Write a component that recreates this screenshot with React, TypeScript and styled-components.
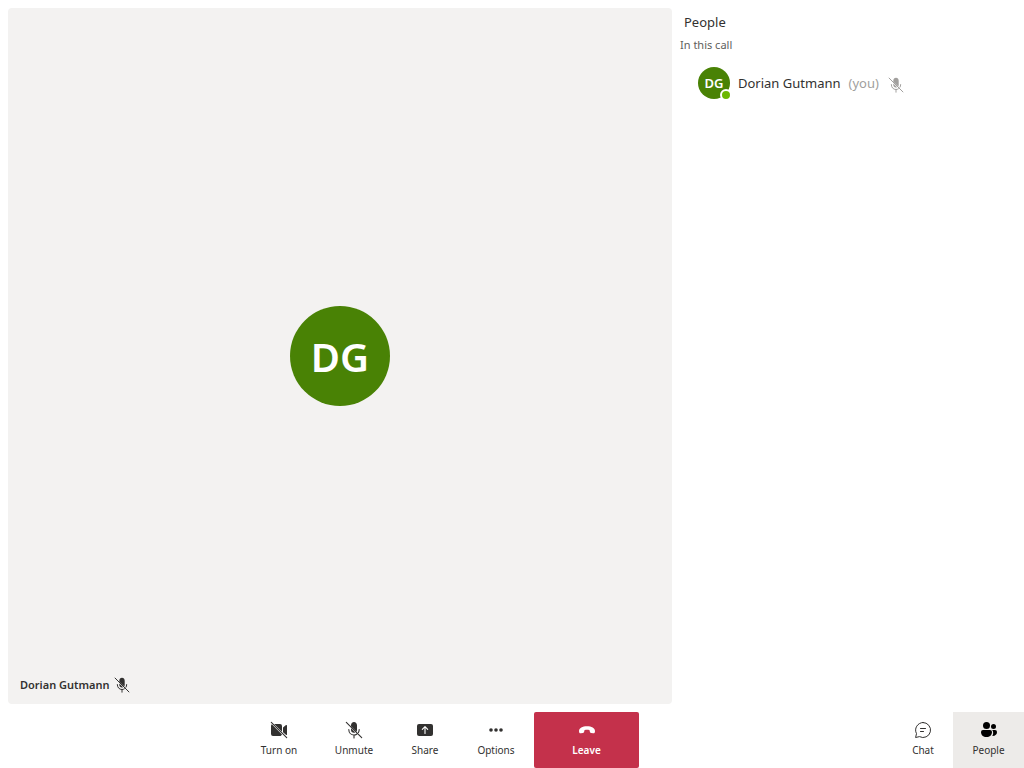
import React from "react";
import styled, { createGlobalStyle, css } from "styled-components";

const GlobalStyle = createGlobalStyle`
  * { box-sizing: border-box; }
  body {
    margin: 0;
    background: #ffffff;
    color: #323130;
    font-family: "Noto Sans", "Open Sans", sans-serif;
  }
  button { font-family: inherit; color: inherit; }
`;

const Page = styled.div`
  display: flex;
  flex-direction: column;
  min-height: 100vh;
`;

const Content = styled.main`
  display: flex;
  flex: 1;
`;

const Stage = styled.section`
  display: flex;
  flex: 1;
  padding: 8px 0 8px 8px;
`;

const VideoTile = styled.div`
  flex: 1;
  display: grid;
  grid-template-rows: 1fr auto 1fr;
  justify-items: center;
  border-radius: 4px;
  background: #f3f2f1;
`;

const Avatar = styled.div<{ $large?: boolean }>`
  display: flex;
  align-items: center;
  justify-content: center;
  border-radius: 50%;
  background: #498205;
  color: #ffffff;
  font-weight: 600;
  ${({ $large }) =>
    $large
      ? css`
          grid-row: 2;
          width: 100px;
          height: 100px;
          padding-top: 2px;
          font-size: 40px;
          line-height: 48px;
        `
      : css`
          position: relative;
          width: 32px;
          height: 32px;
          font-size: 13px;
          line-height: 18px;
        `}
`;

const Presence = styled.span`
  position: absolute;
  right: -2px;
  bottom: -2px;
  width: 12px;
  height: 12px;
  border: 2px solid #ffffff;
  border-radius: 50%;
  background: #6bb700;
`;

const TileLabel = styled.div`
  grid-row: 3;
  align-self: end;
  justify-self: start;
  display: flex;
  align-items: center;
  gap: 3px;
  padding: 0 12px 10px;
  font-size: 11px;
  line-height: 18px;
  font-weight: 600;
`;

const SidePane = styled.aside`
  flex: 0 0 352px;
  padding: 12px 8px;
`;

const PaneTitle = styled.h1`
  margin: 0;
  padding-left: 4px;
  font-size: 13px;
  line-height: 20px;
  font-weight: 400;
`;

const PaneSubtitle = styled.h2`
  margin: 4px 0 14px;
  color: #605e5c;
  font-size: 11px;
  line-height: 17px;
  font-weight: 400;
`;

const People = styled.ul`
  margin: 0;
  padding: 0 0 0 18px;
  list-style: none;
`;

const Person = styled.li`
  display: flex;
  align-items: center;
  gap: 8px;
  font-size: 13px;
  line-height: 20px;
`;

const Muted = styled.span`
  display: flex;
  align-items: center;
  gap: 8px;
  color: #a19f9d;

  svg {
    margin-top: 3px;
  }
`;

const ControlBar = styled.footer`
  display: flex;
  height: 56px;
`;

const CallControls = styled.div`
  display: flex;
  flex: 1;
  justify-content: center;
  padding-right: 12px;
`;

const ControlButton = styled.button<{ $width: number; $variant?: "leave" | "active" }>`
  display: flex;
  flex-direction: column;
  align-items: center;
  justify-content: flex-start;
  gap: 2px;
  width: ${({ $width }) => $width}px;
  padding: 8px 0 0;
  border: 0;
  background: transparent;
  font-size: 10px;
  line-height: 16px;
  white-space: nowrap;
  ${({ $variant }) =>
    $variant === "leave" &&
    css`
      border-radius: 2px;
      background: #c4314b;
      color: #ffffff;
      font-weight: 600;
    `}
  ${({ $variant }) =>
    $variant === "active" &&
    css`
      background: #edebe9;
    `}
`;

const Svg = styled.svg`
  display: block;
  flex: none;
`;

const Icon = ({ size = 20, children }: { size?: number; children: React.ReactNode }) => (
  <Svg width={size} height={size} viewBox="0 0 20 20" fill="currentColor" aria-hidden="true">
    {children}
  </Svg>
);

const MicOff = ({ size }: { size?: number }) => (
  <Icon size={size}>
    <path d="M7 5.200C7 3.400 8.300 2 10 2s3 1.400 3 3.200V10c0 .7-.2 1.300-.5 1.800L7 6.300zM7 8.300 11.200 12.500c-2 1-4.200-.4-4.200-2.500z" />
    <path
      d="M4.800 9.500c0 3.300 2.200 5.500 5.200 5.500 1 0 1.900-.3 2.700-.8M15.200 9.500c0 1.200-.3 2.200-.8 3M10 15v3M2.300 2.300l15.400 15.400"
      fill="none"
      stroke="currentColor"
      strokeWidth="1.100"
      strokeLinecap="round"
    />
  </Icon>
);

const CameraOff = () => (
  <Icon>
    <path d="M5.200 4H11a2 2 0 0 1 2 2v5.800zM2 6c0-.8.3-1.300.8-1.700L13 14.500c-.4.900-1.100 1.500-2 1.500H4a2 2 0 0 1-2-2zM14 7.500l3-2.400c.4-.3 1-.1 1 .5v8.800c0 .4-.4.700-.8.600L14 12.300z" />
    <path d="M2.300 2.300l15.400 15.400" fill="none" stroke="currentColor" strokeWidth="1.100" strokeLinecap="round" />
  </Icon>
);

const ShareIcon = () => (
  <Icon>
    <rect x="2" y="4" width="16" height="12" rx="2" />
    <path d="M10 13.500V6.800M7.300 9.300 10 6.600l2.700 2.700" fill="none" stroke="#fff" strokeWidth="1.100" strokeLinecap="round" strokeLinejoin="round" />
  </Icon>
);

const MoreIcon = () => (
  <Icon>
    <circle cx="5" cy="10" r="1.800" />
    <circle cx="10" cy="10" r="1.800" />
    <circle cx="15" cy="10" r="1.800" />
  </Icon>
);

const HangUp = () => (
  <Icon>
    <path d="M10 6.200c4.500 0 8 1.700 8 4.800 0 1.700-.6 2.500-1.900 2.300l-2-.4c-.8-.2-1.200-.6-1.300-1.400l-.2-1.200c-1.600-.6-3.600-.6-5.200 0l-.2 1.200c-.1.800-.5 1.200-1.300 1.400l-2 .4C2.600 13.500 2 12.700 2 11c0-3.100 3.500-4.800 8-4.800z" />
  </Icon>
);

const ChatIcon = () => (
  <Icon>
    <path
      d="M10 2.500a7.500 7.500 0 1 1-3.500 14.100L2.600 17.500l.9-3.900A7.500 7.500 0 0 1 10 2.500zM7.500 8.500h5M7.500 11.500h3"
      fill="none"
      stroke="currentColor"
      strokeLinecap="round"
      strokeLinejoin="round"
    />
  </Icon>
);

const PeopleIcon = () => (
  <Icon>
    <g fill="#000">
      <circle cx="7.500" cy="5.500" r="3.500" />
      <circle cx="14.500" cy="6.500" r="2.500" />
      <path d="M4 10h7a2 2 0 0 1 2 2c0 3-2.200 5-5.500 5S2 15 2 12a2 2 0 0 1 2-2zM13.200 10H16a2 2 0 0 1 2 2c0 2.500-1.700 4-4.700 3.900 1.200-1.600 1.200-4.300-.1-5.900z" />
    </g>
  </Icon>
);

export default function App() {
  return (
    <Page>
      <GlobalStyle />
      <Content>
        <Stage>
          <VideoTile>
            <Avatar $large>DG</Avatar>
            <TileLabel>
              Dorian Gutmann
              <MicOff size={18} />
            </TileLabel>
          </VideoTile>
        </Stage>
        <SidePane>
          <PaneTitle>People</PaneTitle>
          <PaneSubtitle>In this call</PaneSubtitle>
          <People>
            <Person>
              <Avatar>
                DG
                <Presence />
              </Avatar>
              <span>Dorian Gutmann</span>
              <Muted>
                (you)
                <MicOff size={18} />
              </Muted>
            </Person>
          </People>
        </SidePane>
      </Content>
      <ControlBar>
        <CallControls>
          <ControlButton $width={74}><CameraOff />Turn on</ControlButton>
          <ControlButton $width={76}><MicOff />Unmute</ControlButton>
          <ControlButton $width={66}><ShareIcon />Share</ControlButton>
          <ControlButton $width={76}><MoreIcon />Options</ControlButton>
          <ControlButton $width={105} $variant="leave"><HangUp />Leave</ControlButton>
        </CallControls>
        <ControlButton $width={60}><ChatIcon />Chat</ControlButton>
        <ControlButton $width={71} $variant="active"><PeopleIcon />People</ControlButton>
      </ControlBar>
    </Page>
  );
}
